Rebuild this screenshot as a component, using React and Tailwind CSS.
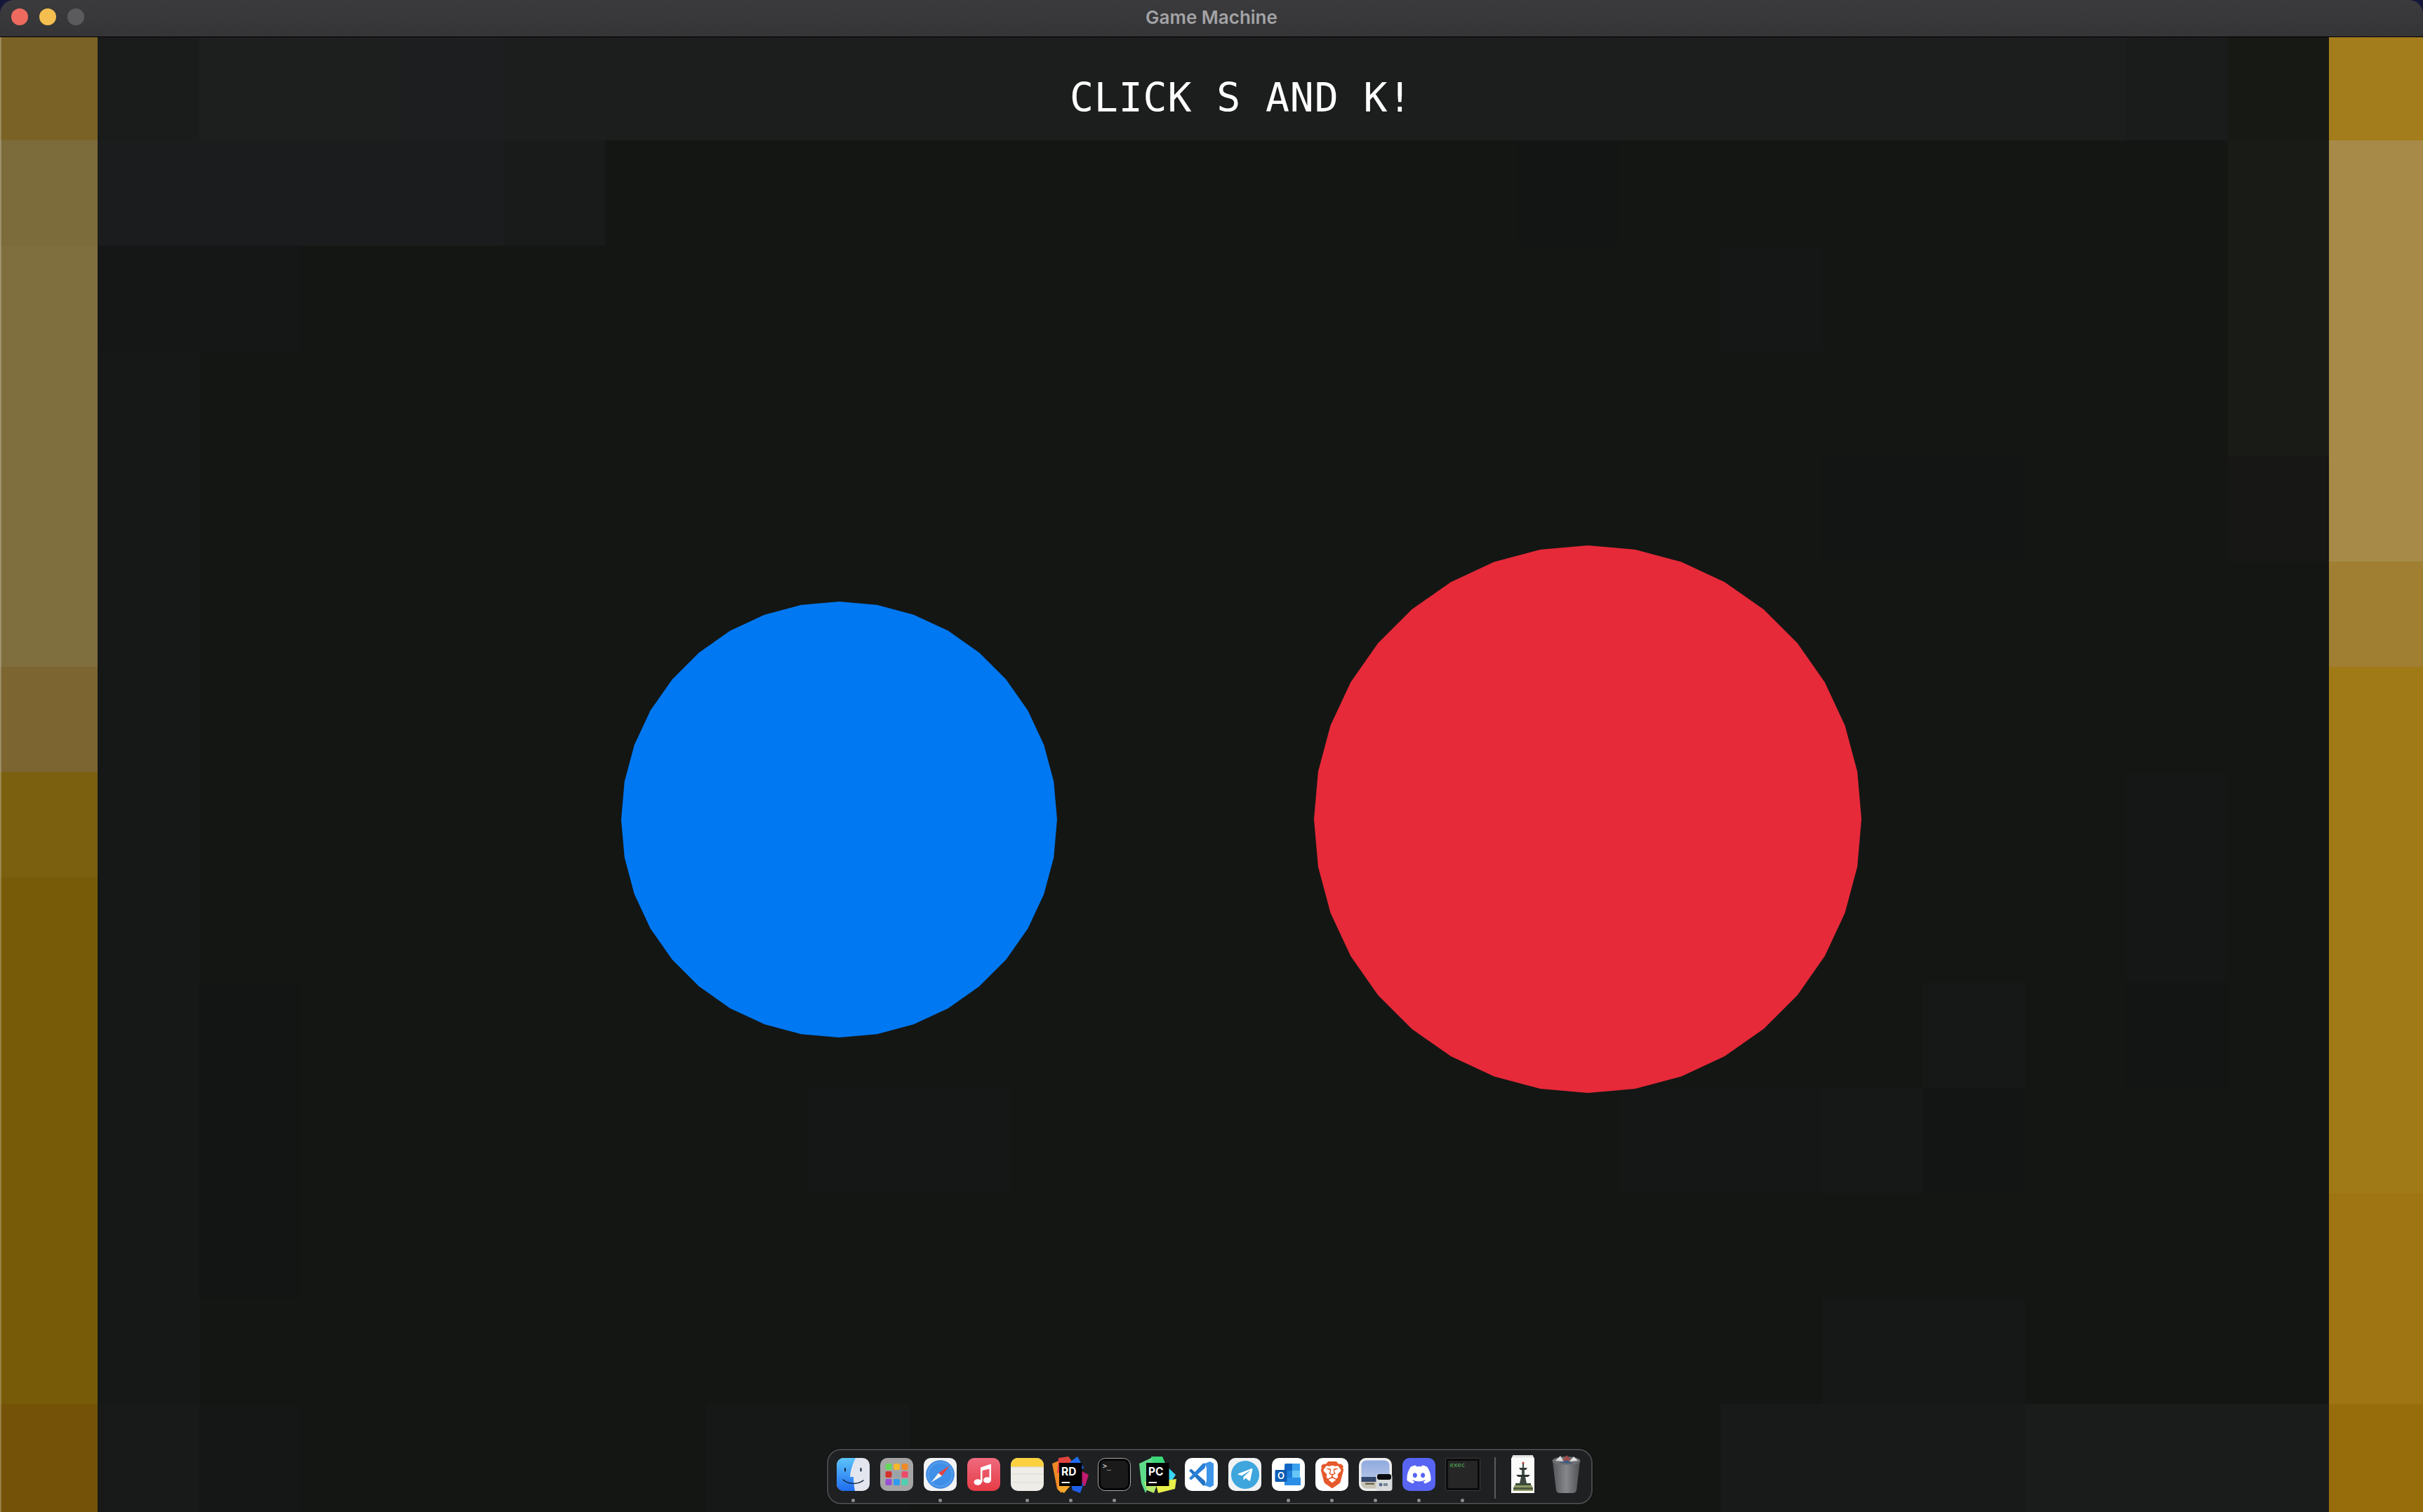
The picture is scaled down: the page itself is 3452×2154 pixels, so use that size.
import React from 'react';
import { FaDiscord, FaTelegramPlane } from 'react-icons/fa';
import { SiBrave } from 'react-icons/si';

// background tiles of the game, one letter per tile
const tileColors = {
  a: 'bg-[#141614]', b: 'bg-[#151716]', c: 'bg-[#161817]', d: 'bg-[#131514]',
  e: 'bg-[#1c1e1d]', f: 'bg-[#1b1c1d]', g: 'bg-[#191b1b]', h: 'bg-[#191b17]',
  i: 'bg-[#171715]', j: 'bg-[#181a19]', k: 'bg-[#171915]', l: 'bg-[#1a1c1b]',
  m: 'bg-[#1d1f1e]', n: 'bg-[#1c1e20]',
  A: 'bg-[#7a6226]', B: 'bg-[#7d6c3b]', C: 'bg-[#7f6e3e]', D: 'bg-[#7c6530]',
  E: 'bg-[#7a600f]', F: 'bg-[#775b08]', G: 'bg-[#745308]',
  H: 'bg-[#a37c1c]', I: 'bg-[#a78a48]', J: 'bg-[#a07f33]', K: 'bg-[#a17a18]',
  M: 'bg-[#9f7513]', N: 'bg-[#976d0c]',
};

const tileRows = [
  'Almmn' + 'e'.repeat(16) + 'lkH',
  'Bffffg' + 'a'.repeat(9) + 'd' + 'a'.repeat(6) + 'hI',
  'Cbb' + 'a'.repeat(14) + 'b' + 'aaaa' + 'hI',
  'Cc' + 'a'.repeat(20) + 'hI',
  'Cc' + 'a'.repeat(16) + 'dd' + 'aa' + 'iI',
  'Cc' + 'a'.repeat(21) + 'J',
  'Dc' + 'a'.repeat(21) + 'K',
  'Ec' + 'a'.repeat(19) + 'baK',
  'Fc' + 'a'.repeat(19) + 'baK',
  'Fcd' + 'a'.repeat(16) + 'cadaK',
  'Fcd' + 'aaaaa' + 'bb' + 'aaaaaa' + 'bb' + 'cd' + 'aaa' + 'K',
  'Fcd' + 'a'.repeat(20) + 'M',
  'Fc' + 'a'.repeat(16) + 'cc' + 'aaa' + 'M',
  'Gjb' + 'aaaa' + 'cc' + 'a'.repeat(8) + 'jjj' + 'lll' + 'N',
];

// the game draws its circles as 36 sided polygons
const polygonPoints = (r) => {
  const pts = [];
  for (let i = 0; i < 36; i++) {
    const a = (i * 10 * Math.PI) / 180;
    pts.push(`${(r + r * Math.cos(a)).toFixed(2)},${(r + r * Math.sin(a)).toFixed(2)}`);
  }
  return pts.join(' ');
};

const GameCircle = ({ r, fill, className }) => (
  <svg width={r * 2} height={r * 2} className={`absolute ${className}`}>
    <polygon points={polygonPoints(r)} fill={fill} />
  </svg>
);

const Icon = ({ children, className = '' }) => (
  <svg width="47" height="47" viewBox="0 0 47 47" className={`overflow-visible ${className}`}>
    {children}
  </svg>
);

const Finder = () => (
  <Icon>
    <defs>
      <linearGradient id="finderBlue" x1="0" y1="0" x2="0" y2="1">
        <stop offset="0" stopColor="#5cc4fa" />
        <stop offset="1" stopColor="#1f6cf0" />
      </linearGradient>
    </defs>
    <rect width="47" height="47" rx="10" fill="#e3e6ee" />
    <path d="M10 0H27C23 8 20 16 19 27H24C24 33 24.5 40 26 47H10A10 10 0 0 1 0 37V10A10 10 0 0 1 10 0Z" fill="url(#finderBlue)" />
    <rect x="11" y="14" width="2" height="5.5" rx="1" fill="#10233f" />
    <rect x="33.5" y="14" width="2" height="5.5" rx="1" fill="#10233f" />
    <path d="M9 31C17 38 30 38 38 32" fill="none" stroke="#10233f" strokeWidth="1.5" strokeLinecap="round" />
  </Icon>
);

const launchpadColors = ['#66d95b', '#f5b92e', '#f08a26', '#d6322c', '#9aa3a8', '#ee4a68', '#9a4fd6', '#2f9bf0', '#4fd0b0'];

const Launchpad = () => (
  <Icon>
    <rect width="47" height="47" rx="10" fill="#a5a5a5" />
    {launchpadColors.map((c, i) => (
      <rect key={c} x={7.5 + (i % 3) * 11.5} y={8 + Math.floor(i / 3) * 11} width="9" height="9" rx="2" fill={c} />
    ))}
  </Icon>
);

const Safari = () => (
  <Icon>
    <rect width="47" height="47" rx="10" fill="#f2f3f5" />
    <circle cx="23.5" cy="23.5" r="20" fill="#3f8fe8" stroke="#2a6fd0" strokeWidth="0.5" />
    <circle cx="23.5" cy="23.5" r="17" fill="none" stroke="#a5cdf5" strokeWidth="2" strokeDasharray="0.6 2" />
    <polygon points="37,11 21,21.5 26,25.5" fill="#e8403a" />
    <polygon points="10.5,35 21,21.5 26,25.5" fill="#f3f4f6" />
  </Icon>
);

const Music = () => (
  <Icon>
    <defs>
      <linearGradient id="musicRed" x1="0" y1="0" x2="0" y2="1">
        <stop offset="0" stopColor="#ef6a7e" />
        <stop offset="1" stopColor="#e63c46" />
      </linearGradient>
    </defs>
    <rect width="47" height="47" rx="10" fill="url(#musicRed)" />
    <path d="M19 13.5L34 8.5V31H31.5V15.5L21.5 18V34.5H19Z" fill="#fff" />
    <ellipse cx="15" cy="34.5" rx="5.5" ry="4.3" fill="#fff" />
    <ellipse cx="28.5" cy="31.5" rx="5.5" ry="4.3" fill="#fff" />
  </Icon>
);

const Notes = () => (
  <Icon>
    <rect width="47" height="47" rx="10" fill="#efede8" />
    <path d="M10 0H37A10 10 0 0 1 47 10V12.5H0V10A10 10 0 0 1 10 0Z" fill="#fbd13f" />
    <line x1="0" y1="13" x2="47" y2="13" stroke="#c9c6bf" strokeWidth="1" strokeDasharray="1 1" />
    <line x1="0" y1="23" x2="47" y2="23" stroke="#dcdad4" strokeWidth="1" />
    <line x1="0" y1="35" x2="47" y2="35" stroke="#dcdad4" strokeWidth="1" />
  </Icon>
);

const JetBrains = ({ label, shapes }) => (
  <Icon>
    {shapes.map(([points, fill]) => (
      <polygon key={points} points={points} fill={fill} />
    ))}
    <rect x="7" y="7" width="32.5" height="33" fill="#000" />
    <text x="10" y="25" fill="#fff" fontSize="15.5" fontWeight="700" fontFamily="Inter, sans-serif">{label}</text>
    <rect x="10.5" y="34" width="11.5" height="2" fill="#fff" />
  </Icon>
);

const riderShapes = [
  ['-3,8 20,-2 30,12 10,50 4,44', '#f08a26'],
  ['6,0 20,-2 28,10 4,22', '#e0433f'],
  ['22,6 33,-2 42,14 30,24', '#1f6cf0'],
  ['30,14 49,24 44,40 28,36', '#c21a6e'],
  ['24,36 42,36 37,50 26,46', '#1f5fe8'],
  ['6,36 26,36 14,50 6,46', '#f7a72c'],
];

const pycharmShapes = [
  ['-3,8 18,-2 24,12 6,50 0,36', '#5fdc8a'],
  ['14,-2 30,-2 36,12 20,16', '#3cd878'],
  ['30,6 49,24 40,38 28,22', '#39d5f2'],
  ['20,34 50,30 48,44 24,50', '#e8f04a'],
  ['4,34 24,34 18,50 8,46', '#b4e86a'],
];

const Terminal = () => (
  <Icon>
    <rect x="0.5" y="0.5" width="46" height="46" rx="10" fill="#050505" stroke="#a9a9a9" strokeWidth="1" />
    <rect x="4" y="4" width="39" height="39" rx="7" fill="#1a1a1a" />
    <text x="7" y="15" fill="#f0f0f0" fontSize="10" fontFamily="'DejaVu Sans Mono', monospace">&gt;_</text>
  </Icon>
);

const VsCode = () => (
  <Icon>
    <rect width="47" height="47" rx="10" fill="#fff" />
    <polygon points="6,18 9,15.5 29,33 29,39 26,39.5" fill="#2272c4" />
    <polygon points="6,29 9,31.5 29,14 29,8 26,7.5" fill="#2a80d6" />
    <path d="M28 8L36 5L41 8V39L36 42L28 39L31 33V14Z" fill="#3d95ea" />
  </Icon>
);

const Telegram = () => (
  <div className="w-[47px] h-[47px] rounded-[10px] bg-[#f1f2f3] flex items-center justify-center">
    <div className="w-[40px] h-[40px] rounded-full bg-[#3ea5dd] flex items-center justify-center">
      <FaTelegramPlane size={24} color="#fff" />
    </div>
  </div>
);

const Outlook = () => (
  <Icon>
    <rect width="47" height="47" rx="10" fill="#fff" />
    <rect x="18" y="8" width="22" height="31" rx="2" fill="#1066c4" />
    <rect x="29" y="8" width="11" height="10" fill="#3aa0ee" />
    <rect x="29" y="18" width="11" height="10" fill="#67c5f6" />
    <rect x="18" y="18" width="11" height="10" fill="#1f7fdc" />
    <path d="M18 28H41V39H18Z" fill="#2a8ee6" />
    <rect x="4.5" y="17" width="17" height="17" rx="1.5" fill="#0f5cb5" />
    <text x="13" y="30" textAnchor="middle" fill="#fff" fontSize="13" fontWeight="600" fontFamily="Inter, sans-serif">O</text>
  </Icon>
);

const Brave = () => (
  <div className="w-[47px] h-[47px] rounded-[10px] bg-white flex items-center justify-center">
    <SiBrave size={38} color="#e5592b" />
  </div>
);

const Preview = () => (
  <Icon>
    <defs>
      <linearGradient id="previewSky" x1="0" y1="0" x2="0" y2="1">
        <stop offset="0" stopColor="#8faadf" />
        <stop offset="1" stopColor="#c3cfe8" />
      </linearGradient>
    </defs>
    <rect width="47" height="47" rx="10" fill="#f0efee" />
    <rect x="3.5" y="3.5" width="40" height="40" rx="7" fill="url(#previewSky)" />
    <rect x="3.5" y="27" width="40" height="7" fill="#33466b" />
    <path d="M3.5 34H43.5V36.5A7 7 0 0 1 36.5 43.5H10.5A7 7 0 0 1 3.5 36.5Z" fill="#c9c6b6" />
    <rect x="9" y="35.5" width="13" height="2.5" fill="#6a6650" />
    <rect x="24.5" y="23" width="23" height="24" rx="4" fill="#d9dcde" />
    <rect x="26" y="23" width="20" height="8" rx="3" fill="#0c0c0e" />
    <circle cx="31" cy="38" r="2.5" fill="#58708c" />
    <rect x="35" y="36" width="6" height="4" fill="#7c8a98" />
  </Icon>
);

const Discord = () => (
  <div className="w-[47px] h-[47px] rounded-[10px] bg-[#5865f2] flex items-center justify-center">
    <FaDiscord size={37} color="#fff" />
  </div>
);

const Exec = () => (
  <div className="w-[50px] h-[47px] -mx-[1.5px] bg-[#0b0b0b] border border-[#3a3a3a] rounded-[2px] p-[3px]">
    <div className="w-full h-full bg-[#262626] pl-[3px] pt-[1px] text-[9px] leading-[10px] text-[#55b555] font-['DejaVu_Sans_Mono',monospace]">
      exec
    </div>
  </div>
);

const Poster = () => (
  <svg width="33" height="54" viewBox="0 0 33 54" className="-mt-[4px]">
    <rect x="2" y="0" width="29" height="3" fill="#ddd" />
    <rect x="1" y="2" width="31" height="3" fill="#eee" />
    <rect x="0" y="4" width="33" height="50" fill="#fbfbfa" />
    <circle cx="17" cy="11" r="1.5" fill="#c3352c" />
    <rect x="16" y="12" width="2" height="7" fill="#3c4a36" />
    <polygon points="11,18 23,18 21,21 13,21" fill="#2f3a33" />
    <rect x="15" y="21" width="4" height="8" fill="#45504a" />
    <polygon points="7,28 27,28 24,31 10,31" fill="#2c3530" />
    <polygon points="14,31 20,31 22,40 12,40" fill="#3d4740" />
    <rect x="6" y="40" width="22" height="3" fill="#3a4a3a" />
    <rect x="4" y="43" width="26" height="3" fill="#8f9b62" />
    <rect x="3" y="46" width="28" height="3" fill="#4e5a40" />
    <rect x="3" y="49" width="28" height="2" fill="#8f9b62" />
  </svg>
);

const Trash = () => (
  <svg width="47" height="54" viewBox="0 0 47 54" className="-mt-[4px]">
    <defs>
      <linearGradient id="trashBody" x1="0" y1="0" x2="1" y2="0">
        <stop offset="0" stopColor="#55575a" />
        <stop offset="0.5" stopColor="#85878a" />
        <stop offset="1" stopColor="#4e5053" />
      </linearGradient>
    </defs>
    <path d="M4 9L9 50Q10 54 14 54H33Q37 54 38 50L43 9Z" fill="url(#trashBody)" />
    <ellipse cx="23.5" cy="8" rx="20" ry="6" fill="#6d6f72" />
    <polygon points="8,8 15,1 20,9" fill="#d8d8d8" />
    <polygon points="18,8 24,0 30,7" fill="#a64a4a" />
    <polygon points="28,9 34,2 40,8" fill="#e2e2e2" />
    <polygon points="14,11 24,7 32,12" fill="#3e5a80" />
  </svg>
);

const dockItems = [
  { key: 'finder', icon: <Finder />, running: true },
  { key: 'launchpad', icon: <Launchpad /> },
  { key: 'safari', icon: <Safari />, running: true },
  { key: 'music', icon: <Music /> },
  { key: 'notes', icon: <Notes />, running: true },
  { key: 'rider', icon: <JetBrains label="RD" shapes={riderShapes} />, running: true },
  { key: 'terminal', icon: <Terminal />, running: true },
  { key: 'pycharm', icon: <JetBrains label="PC" shapes={pycharmShapes} /> },
  { key: 'vscode', icon: <VsCode /> },
  { key: 'telegram', icon: <Telegram /> },
  { key: 'outlook', icon: <Outlook />, running: true },
  { key: 'brave', icon: <Brave />, running: true },
  { key: 'preview', icon: <Preview />, running: true },
  { key: 'discord', icon: <Discord />, running: true },
  { key: 'exec', icon: <Exec />, running: true },
];

const DockItem = ({ icon, running }) => (
  <div className="w-[47px] flex flex-col items-center">
    <div className="h-[47px] flex items-start justify-center">{icon}</div>
    <div className={`w-[5px] h-[5px] mt-[11px] rounded-full ${running ? 'bg-[#8c8c8c]' : ''}`} />
  </div>
);

const Dock = () => (
  <div className="absolute left-[1178px] top-[2064px] w-[1091px] h-[79px] flex gap-[15px] pl-[12px] pt-[11px] rounded-[20px] bg-[#1e2022] border-2 border-[#47484a] shadow-[0_0_0_1px_#0b0c0c]">
    {dockItems.map(item => (
      <DockItem key={item.key} icon={item.icon} running={item.running} />
    ))}
    <div className="w-[2px] h-[59px] ml-[7px] mt-[-1px] bg-[#5a5b5d]" />
    <DockItem icon={<Poster />} />
    <DockItem icon={<Trash />} />
  </div>
);

const App = () => {
  return (
    <div className="relative w-[3452px] h-[2154px] overflow-hidden bg-[#14163a] flex flex-col">
      {/* window title bar */}
      <div className="relative h-[53px] shrink-0 rounded-t-[20px] bg-gradient-to-b from-[#3b3b3e] to-[#353537] border-b border-black flex items-center justify-center">
        <div className="absolute left-[16px] top-[12px] flex gap-[16px]">
          <div className="w-[24px] h-[24px] rounded-full bg-[#ee6a5f]" />
          <div className="w-[24px] h-[24px] rounded-full bg-[#f5bf4f]" />
          <div className="w-[24px] h-[24px] rounded-full bg-[#5b5b5e]" />
        </div>
        <span className="-mt-[3px] text-[26px] leading-none font-semibold text-[#a3a3a5] font-['Inter',sans-serif]">Game Machine</span>
      </div>

      {/* game tiles */}
      <div className="flex-1 grid grid-cols-[139px_repeat(22,144.5px)_1fr] grid-rows-[147px_repeat(12,150px)_1fr]">
        {tileRows.flatMap((row, y) =>
          row.split('').map((t, x) => <div key={`${y}-${x}`} className={tileColors[t]} />)
        )}
      </div>

      <div className="absolute left-0 top-[53px] bottom-0 w-[2px] bg-white/25" />

      <h1 className="absolute left-[1524px] top-[112px] text-[56.5px] leading-none font-normal tracking-[0.85px] text-white whitespace-pre font-['DejaVu_Sans_Mono',monospace]">CLICK S AND K!</h1>

      <GameCircle r={310.5} fill="#0078f2" className="left-[885px] top-[857px]" />
      <GameCircle r={390} fill="#e62a39" className="left-[1872px] top-[777px]" />

      <Dock />
    </div>
  );
};

export default App;
